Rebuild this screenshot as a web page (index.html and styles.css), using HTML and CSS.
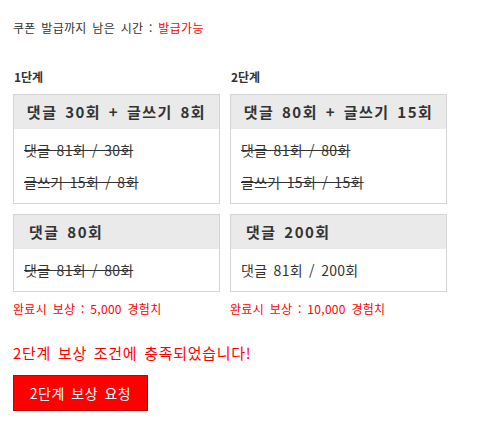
FILE: index.html
```html
<!DOCTYPE html>
<html lang="ko">
<head>
    <meta charset="UTF-8">
    <meta name="viewport" content="width=device-width, initial-scale=1.0">
    <title>출석 보상</title>
    <link rel="stylesheet" href="styles.css">
</head>
<body>
    <div class="container">
        <p class="coupon-time">쿠폰 발급까지 남은 시간 : <span class="red">발급가능</span></p>

        <div class="stages">
            <div class="stage stage-1">
                <div class="stage-title">1단계</div>
                <div class="mission">
                    <div class="mission-head center">댓글 30회 + 글쓰기 8회</div>
                    <div class="mission-body">
                        <div class="done">댓글 81회 / 30회</div>
                        <div class="done">글쓰기 15회 / 8회</div>
                    </div>
                </div>
                <div class="mission">
                    <div class="mission-head">댓글 80회</div>
                    <div class="mission-body">
                        <div class="done">댓글 81회 / 80회</div>
                    </div>
                </div>
                <div class="reward">완료시 보상 : 5,000 경험치</div>
            </div>
            <div class="stage stage-2">
                <div class="stage-title">2단계</div>
                <div class="mission">
                    <div class="mission-head center">댓글 80회 + 글쓰기 15회</div>
                    <div class="mission-body">
                        <div class="done">댓글 81회 / 80회</div>
                        <div class="done">글쓰기 15회 / 15회</div>
                    </div>
                </div>
                <div class="mission">
                    <div class="mission-head">댓글 200회</div>
                    <div class="mission-body">
                        <div>댓글 81회 / 200회</div>
                    </div>
                </div>
                <div class="reward">완료시 보상 : 10,000 경험치</div>
            </div>
        </div>

        <p class="result">2단계 보상 조건에 충족되었습니다!</p>
        <button class="btn-reward" onclick="requestReward()">2단계 보상 요청</button>
    </div>
    <script>
        function requestReward() {
            alert('2단계 보상을 요청했습니다.');
        }
    </script>
</body>
</html>
```

FILE: styles.css
```css
html, body {
    margin: 0;
    padding: 0;
    font-family: "Noto Sans CJK KR", "Liberation Sans", sans-serif;
    background-color: #fff;
    color: #333;
}
.container {
    padding: 20px 13px;
}
.red {
    color: #ff0000;
}
.coupon-time {
    margin: 0;
    font-size: 12px;
    line-height: 16px;
    letter-spacing: 0.3px;
    word-spacing: 2px;
}
.stages {
    display: grid;
    grid-template-columns: 207px 217px;
    column-gap: 10px;
    margin-top: 33px;
}
.stage-title {
    font-size: 12px;
    font-weight: bold;
    line-height: 16px;
    padding-left: 1px;
    margin-bottom: 9px;
}
.mission {
    border: 1px solid #d5d5d5;
    margin-bottom: 10px;
}
.mission-head {
    background-color: #eaeaea;
    height: 34px;
    line-height: 34px;
    padding: 0 15px;
    font-size: 15px;
    font-weight: bold;
    letter-spacing: 1.5px;
    word-spacing: 2px;
    white-space: nowrap;
}
.mission-head.center {
    text-align: center;
    padding: 0;
}
.mission-body {
    padding: 5px 10px;
    font-size: 14px;
    line-height: 32px;
    letter-spacing: 0.3px;
    word-spacing: 2px;
}
.done {
    text-decoration: line-through;
}
.reward {
    margin-top: -1px;
    font-size: 12px;
    line-height: 16px;
    letter-spacing: 0.3px;
    word-spacing: 2px;
    color: #ff0000;
}
.result {
    margin: 26px 0 12px;
    font-size: 15px;
    line-height: 20px;
    letter-spacing: 0.7px;
    word-spacing: 2px;
    color: #ff0000;
}
.btn-reward {
    width: 135px;
    height: 36px;
    border: 1px solid #c40000;
    background-color: #ff0000;
    color: #fff;
    font-family: inherit;
    font-size: 14px;
    letter-spacing: 0.5px;
    word-spacing: 2px;
    cursor: pointer;
}
```
